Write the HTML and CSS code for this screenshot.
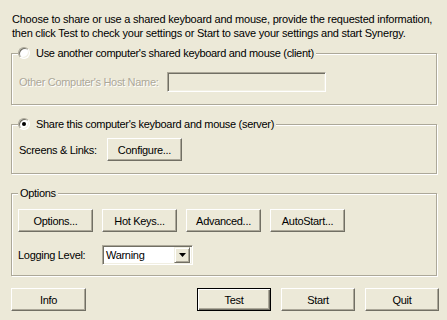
FILE: index.html
```html
<!DOCTYPE html>
<html lang="en">
<head>
    <meta charset="UTF-8">
    <title>Synergy</title>
    <link rel="stylesheet" href="styles.css">
</head>
<body>
    <div class="dialog">
        <p class="intro">Choose to share or use a shared keyboard and mouse, provide the requested information,<br>then click Test to check your settings or Start to save your settings and start Synergy.</p>

        <fieldset class="group group-client">
            <legend class="radio-legend"><span class="radio"></span>Use another computer's shared keyboard and mouse (client)</legend>
            <div class="row">
                <span class="label disabled host-label">Other Computer's Host Name:</span>
                <span class="textbox"></span>
            </div>
        </fieldset>

        <fieldset class="group group-server">
            <legend class="radio-legend"><span class="radio checked"></span>Share this computer's keyboard and mouse (server)</legend>
            <div class="row">
                <span class="label links-label">Screens &amp; Links:</span>
                <button class="btn">Configure...</button>
            </div>
        </fieldset>

        <fieldset class="group group-options">
            <legend>Options</legend>
            <div class="row buttons">
                <button class="btn">Options...</button>
                <button class="btn">Hot Keys...</button>
                <button class="btn">Advanced...</button>
                <button class="btn">AutoStart...</button>
            </div>
            <div class="row logging">
                <span class="label log-label">Logging Level:</span>
                <div class="combo">
                    <span class="combo-text">Warning</span>
                    <span class="combo-arrow"><svg width="7" height="4" viewBox="0 0 7 4"><path d="M0 0h7L3.5 4z" fill="#000"/></svg></span>
                </div>
            </div>
        </fieldset>

        <div class="footer">
            <button class="btn">Info</button>
            <div class="footer-right">
                <button class="btn default">Test</button>
                <button class="btn">Start</button>
                <button class="btn">Quit</button>
            </div>
        </div>
    </div>
</body>
</html>
```

FILE: styles.css
```css
body {
    margin: 0;
    background: #ece9d8;
    font-family: "Liberation Sans", Arial, sans-serif;
    font-size: 11px;
    letter-spacing: -0.3px;
    color: #000;
}
.dialog {
    width: 447px;
    height: 320px;
    padding: 0 10px 0 11px;
    box-sizing: border-box;
}
.intro {
    margin: 0;
    padding: 12px 0 0 1px;
    line-height: 14px;
    white-space: nowrap;
    letter-spacing: -0.22px;
}
.group {
    margin: 6px 0 0 0;
    width: 426px;
    box-sizing: border-box;
    border: 1px solid #aca899;
    box-shadow: inset 1px 1px 0 #fff, 1px 1px 0 #fff;
    padding: 0 6px 12px 6px;
    min-width: 0;
}
.group legend {
    padding: 0 2px;
    margin-left: 0;
    line-height: 14px;
    height: 14px;
    background: #ece9d8;
    white-space: nowrap;
}
.group .radio-legend {
    padding: 0 2px 0 0;
    display: flex;
    align-items: center;
}
.group-server,
.group-options {
    margin-top: 12px;
}
.radio {
    display: inline-block;
    width: 12px;
    height: 12px;
    box-sizing: border-box;
    border-radius: 50%;
    border: 1px solid;
    border-color: #aca899 #fff #fff #aca899;
    box-shadow: inset 1px 1px 0 #716f64, inset -1px -1px 0 #f1efe2;
    background: #fff;
    margin: 0 6px 0 0;
    position: relative;
}
.radio.checked::after {
    content: "";
    position: absolute;
    left: 3px;
    top: 3px;
    width: 4px;
    height: 4px;
    border-radius: 50%;
    background: #000;
}
.row {
    display: flex;
    align-items: center;
}
.group-client .row {
    margin-top: 12px;
    padding-left: 1px;
}
.group-server .row {
    margin-top: 7px;
    padding-left: 1px;
}
.label {
    white-space: nowrap;
}
.label.disabled {
    color: #aca899;
    text-shadow: 1px 1px 0 #fff;
}
.host-label {
    width: 148px;
}
.links-label {
    width: 88px;
}
.log-label {
    width: 84px;
}
.textbox {
    display: block;
    width: 159px;
    height: 20px;
    box-sizing: border-box;
    border: 1px solid;
    border-color: #aca899 #fff #fff #aca899;
    box-shadow: inset 1px 1px 0 #716f64, inset -1px -1px 0 #f1efe2;
}
.btn {
    width: 75px;
    height: 23px;
    margin: 0;
    padding: 0;
    box-sizing: border-box;
    background: #ece9d8;
    font-family: inherit;
    font-size: 11px;
    letter-spacing: -0.3px;
    color: #000;
    border: 1px solid;
    border-color: #fff #716f64 #716f64 #fff;
    box-shadow: inset -1px -1px 0 #aca899;
}
.btn.default {
    border-color: #000;
    box-shadow: inset 1px 1px 0 #fff, inset -1px -1px 0 #716f64, inset -2px -2px 0 #aca899;
}
.group-options .buttons {
    margin-top: 9px;
    gap: 9px;
}
.group-options .logging {
    margin-top: 13px;
}
.group-options {
    padding-bottom: 10px;
}
.combo {
    display: flex;
    align-items: center;
    width: 91px;
    height: 20px;
    box-sizing: border-box;
    border: 1px solid;
    border-color: #aca899 #fff #fff #aca899;
    box-shadow: inset 1px 1px 0 #716f64, inset -1px -1px 0 #f1efe2;
    background: #fff;
    padding: 2px 2px 2px 3px;
}
.combo-text {
    flex: 1;
}
.combo-arrow {
    display: flex;
    align-items: center;
    justify-content: center;
    width: 16px;
    height: 16px;
    box-sizing: border-box;
    background: #ece9d8;
    border: 1px solid;
    border-color: #f1efe2 #716f64 #716f64 #f1efe2;
    box-shadow: inset 1px 1px 0 #fff, inset -1px -1px 0 #aca899;
}
.footer {
    display: flex;
    justify-content: space-between;
    margin-top: 12px;
    width: 428px;
}
.footer-right {
    display: flex;
    gap: 10px;
}
.footer-right .btn {
    width: 74px;
}
```
